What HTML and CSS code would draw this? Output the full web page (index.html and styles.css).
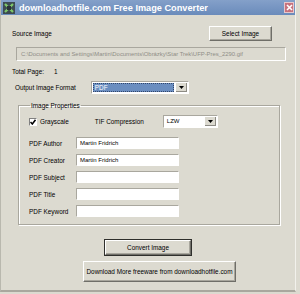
FILE: index.html
```html
<!DOCTYPE html>
<html lang="en">
<head>
    <meta charset="UTF-8">
    <title>Free Image Converter</title>
    <link rel="stylesheet" href="styles.css">
</head>
<body>
    <div class="window">
        <div class="titlebar">
            <svg class="app-icon" width="12" height="12" viewBox="0 0 12 12">
                <rect x="0" y="0" width="12" height="12" fill="#3d4a52"/>
                <path d="M2 2 L10 10 M10 2 L2 10" stroke="#7fc96a" stroke-width="2.2"/>
                <rect x="4" y="4" width="4" height="4" fill="#2a3238"/>
            </svg>
            <span class="title">downloadhotfile.com Free Image Converter</span>
            <span class="close">
                <svg width="7" height="7" viewBox="0 0 7 7"><path d="M1 1 L6 6 M6 1 L1 6" stroke="#fff" stroke-width="1.6"/></svg>
            </span>
        </div>

        <div class="content">
            <div class="row source-row">
                <span class="label">Source Image</span>
                <button class="btn select-btn">Select Image</button>
            </div>

            <div class="path-box">C:\Documents and Settings\Martin\Documents\Obrázky\Star Trek\UFP-Pres_2290.gif</div>

            <div class="row pages-row">
                <span class="label">Total Page:</span>
                <span class="page-count">1</span>
            </div>

            <div class="row format-row">
                <span class="label">Output Image Format</span>
                <div class="combo format-combo">
                    <span class="combo-value selected">PDF</span>
                    <span class="combo-arrow"><svg width="5" height="3" viewBox="0 0 5 3"><path d="M0 0 H5 L2.5 3 Z" fill="#000"/></svg></span>
                </div>
            </div>

            <fieldset class="group">
                <legend>Image Properties</legend>

                <div class="row gray-row">
                    <span class="checkbox">
                        <svg width="6" height="6" viewBox="0 0 6 6"><path d="M0.5 3 L2.3 5 L5.5 0.8" stroke="#000" stroke-width="1.5" fill="none"/></svg>
                    </span>
                    <span class="label gray-label">Grayscale</span>
                    <span class="label tif-label">TIF Compression</span>
                    <div class="combo tif-combo">
                        <span class="combo-value">LZW</span>
                        <span class="combo-arrow"><svg width="5" height="3" viewBox="0 0 5 3"><path d="M0 0 H5 L2.5 3 Z" fill="#000"/></svg></span>
                    </div>
                </div>

                <div class="fields">
                    <div class="field">
                        <span class="label">PDF Author</span>
                        <div class="textbox">Martin Fridrich</div>
                    </div>
                    <div class="field">
                        <span class="label">PDF Creator</span>
                        <div class="textbox">Martin Fridrich</div>
                    </div>
                    <div class="field">
                        <span class="label">PDF Subject</span>
                        <div class="textbox"></div>
                    </div>
                    <div class="field">
                        <span class="label">PDF Title</span>
                        <div class="textbox"></div>
                    </div>
                    <div class="field">
                        <span class="label">PDF Keyword</span>
                        <div class="textbox"></div>
                    </div>
                </div>
            </fieldset>

            <div class="actions">
                <button class="btn convert-btn">Convert Image</button>
                <button class="btn more-btn">Download More freeware from downloadhotfile.com</button>
            </div>
        </div>
    </div>
</body>
</html>
```
FILE: styles.css
```css
/* General Styles */
body {
    margin: 0;
    background: #dcdad0;
    font-family: 'Liberation Sans', Arial, sans-serif;
    font-size: 6.4px;
    color: #000;
}

.window {
    width: 296px;
    height: 292px;
    background: #dcdad0;
    border-left: 1px solid #b9b8ae;
    border-right: 1px solid #f2f1ec;
    border-bottom: 2px solid #a9a79e;
    box-sizing: border-box;
}

/* Title bar */
.titlebar {
    height: 15px;
    display: flex;
    align-items: center;
    background: linear-gradient(#84a0c9, #6a8bbb);
    color: #fff;
    padding-left: 2px;
}

.app-icon {
    flex: none;
}

.title {
    margin-left: 4px;
    font-size: 9.2px;
    font-weight: bold;
    white-space: nowrap;
}

.close {
    margin-left: auto;
    margin-right: 1px;
    width: 8px;
    height: 9px;
    background: #c7727d;
    border: 1px solid #e8c7cc;
    display: flex;
    align-items: center;
    justify-content: center;
}

/* Content */
.content {
    display: flex;
    flex-direction: column;
}

.row {
    display: flex;
    align-items: center;
}

.label {
    white-space: nowrap;
}

.btn {
    font-family: 'Liberation Sans', Arial, sans-serif;
    font-size: 6.4px;
    color: #000;
    background: #dcdad0;
    border: 1px solid;
    border-color: #fff #6f6e68 #6f6e68 #fff;
    box-shadow: inset -1px -1px 0 #a8a69d;
    padding: 0;
    white-space: nowrap;
}

.source-row {
    margin-top: 11px;
    padding-left: 11px;
}

.select-btn {
    margin-left: auto;
    margin-right: 23px;
    width: 63px;
    height: 15px;
}

.path-box {
    margin: 6px 0 0 15px;
    width: 270px;
    height: 14px;
    box-sizing: border-box;
    border: 1px solid;
    border-color: #a9a79e #fff #fff #a9a79e;
    color: #8f8d86;
    font-size: 5.9px;
    line-height: 12px;
    padding-left: 4px;
    white-space: nowrap;
    overflow: hidden;
}

.pages-row {
    margin-top: 5px;
    height: 10px;
    padding-left: 11px;
}

.page-count {
    margin-left: 10px;
}

.format-row {
    margin-top: 5px;
    padding-left: 14px;
}

/* Combo boxes */
.combo {
    display: flex;
    height: 13px;
    box-sizing: border-box;
    background: #fff;
    border: 1px solid;
    border-color: #a9a79e #fff #fff #a9a79e;
    padding: 1px;
}

.combo-value {
    flex: 1;
    line-height: 9px;
    padding-left: 2px;
}

.combo-value.selected {
    background: #6b8ec0;
    color: #fff;
    outline: 1px dotted #31456a;
    outline-offset: -1px;
}

.combo-arrow {
    width: 11px;
    background: #dcdad0;
    border-left: 1px solid #fff;
    box-shadow: inset -1px -1px 0 #8d8b84;
    display: flex;
    align-items: center;
    justify-content: center;
    margin-left: 1px;
}

.format-combo {
    margin-left: 15px;
    width: 98px;
}

/* Group box */
.group {
    margin: 7px 0 0 17px;
    width: 262px;
    box-sizing: border-box;
    border: 1px solid #a9a79e;
    box-shadow: 1px 1px 0 #fff, inset 1px 1px 0 #fff;
    padding: 0 0 7px 10px;
}

.group legend {
    margin-left: 1px;
    padding: 0 1px;
    line-height: 9px;
    font-size: 6.4px;
}

.gray-row {
    margin-top: 5px;
}

.checkbox {
    width: 8px;
    height: 8px;
    box-sizing: border-box;
    background: #fff;
    border: 1px solid;
    border-color: #808080 #fff #fff #808080;
    display: flex;
    align-items: center;
    justify-content: center;
}

.gray-label {
    margin-left: 3px;
}

.tif-label {
    margin-left: 26px;
}

.tif-combo {
    margin-left: 19px;
    width: 55px;
}

.tif-combo .combo-value {
    font-size: 6px;
}

/* Fields */
.fields {
    margin-top: 9px;
    display: flex;
    flex-direction: column;
    gap: 5px;
}

.field {
    display: flex;
    align-items: center;
    height: 12px;
}

.field .label {
    width: 47px;
}

.textbox {
    width: 103px;
    height: 12px;
    box-sizing: border-box;
    background: #fff;
    border: 1px solid;
    border-color: #a9a79e #fff #fff #a9a79e;
    line-height: 10px;
    padding-left: 3px;
    font-size: 6px;
}

/* Bottom buttons */
.actions {
    display: flex;
    flex-direction: column;
    align-items: flex-start;
}

.convert-btn {
    margin: 15px 0 0 104px;
    width: 86px;
    height: 15px;
    outline: 1px solid #2f2f2c;
}

.more-btn {
    margin: 6px 0 0 82px;
    width: 153px;
    height: 21px;
}
```
